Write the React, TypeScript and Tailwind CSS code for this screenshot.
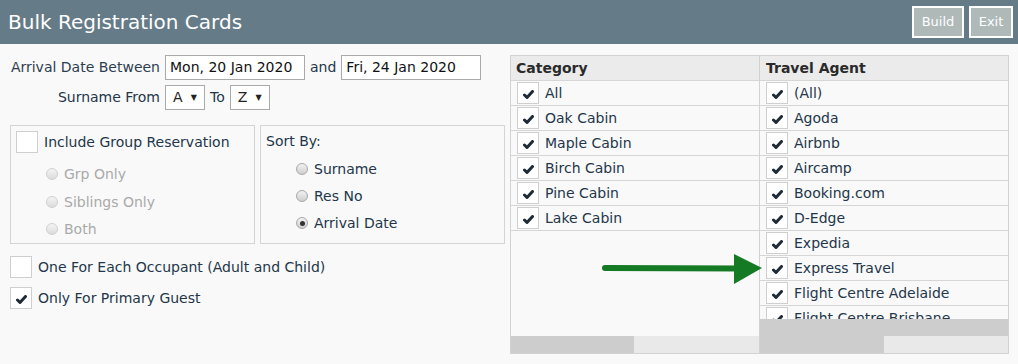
import React from 'react';

const font = { fontFamily: '"DejaVu Sans", Verdana, sans-serif' };

const Check = () => (
  <svg width="11" height="9" viewBox="0 0 11 9">
    <path d="M1.5 5 L4 7.5 L9.5 1.5" fill="none" stroke="#1e2a36" strokeWidth="3" strokeLinecap="round" strokeLinejoin="round" />
  </svg>
);

const Box = ({ checked }: { checked?: boolean }) => (
  <div className="w-[22px] h-[22px] shrink-0 bg-white border border-[#cfcfcf] flex items-center justify-center pt-[2px]">
    {checked && <Check />}
  </div>
);

const Radio = ({ on, disabled }: { on?: boolean; disabled?: boolean }) => (
  <div
    className={`w-[12px] h-[12px] rounded-full border flex items-center justify-center shrink-0 ${
      disabled ? 'border-[#d0d0d0] bg-gradient-to-b from-[#f4f4f4] to-[#dcdcdc]' : 'border-[#a8a8a8] bg-gradient-to-b from-[#f2f2f2] to-[#cfcfcf]'
    }`}
  >
    {on && <div className="w-[5px] h-[5px] rounded-full bg-[#333]" />}
  </div>
);

const Select = ({ v }: { v: string }) => (
  <div className="w-[40px] h-[25px] bg-white border border-[#aaa] flex items-center justify-between pl-[7px] pr-[7px] text-[14px] text-[#222]">
    <span>{v}</span>
    <span className="text-[8px]">▼</span>
  </div>
);

const categories = ['All', 'Oak Cabin', 'Maple Cabin', 'Birch Cabin', 'Pine Cabin', 'Lake Cabin'];
const agents = [
  '(All)',
  'Agoda',
  'Airbnb',
  'Aircamp',
  'Booking.com',
  'D-Edge',
  'Expedia',
  'Express Travel',
  'Flight Centre Adelaide',
  'Flight Centre Brisbane',
];

const Row = ({ label }: { label: string }) => (
  <div className="h-[25px] shrink-0 border-b border-[#d6d6d6] flex items-center pl-[6px] gap-[6px] text-[14px] text-[#23364a]">
    <Box checked />
    <span>{label}</span>
  </div>
);

export default function App() {
  return (
    <div className="w-[1018px] h-[364px] bg-[#f9f9f9] relative overflow-hidden" style={font}>
      <div className="h-[44px] bg-[#657b88] flex items-center justify-between pl-[8px] pr-[5px]">
        <h1 className="text-white text-[20px]">Bulk Registration Cards</h1>
        <div className="flex gap-[5px]">
          <button className="w-[52px] h-[32px] bg-[#aeb9b8] border-2 border-white text-white text-[13px]">Build</button>
          <button className="w-[44px] h-[32px] bg-[#aeb9b8] border-2 border-white text-white text-[13px]">Exit</button>
        </div>
      </div>

      <div className="flex">
        <div className="w-[510px] pl-[10px] pt-[11px] text-[14px] text-[#23364a]">
          <div className="flex items-center h-[25px]">
            <span className="w-[155px] text-right pr-[5px] text-[#2d3e50] whitespace-nowrap">Arrival Date Between</span>
            <div className="w-[140px] h-[25px] bg-white border border-[#aaa] flex items-center pl-[4px] text-[#111] whitespace-nowrap">Mon, 20 Jan 2020</div>
            <span className="px-[5px]">and</span>
            <div className="w-[140px] h-[25px] bg-white border border-[#aaa] flex items-center pl-[4px] text-[#111] whitespace-nowrap">Fri, 24 Jan 2020</div>
          </div>
          <div className="flex items-center h-[25px] mt-[5px]">
            <span className="w-[155px] text-right pr-[5px]">Surname From</span>
            <Select v="A" />
            <span className="px-[5px]">To</span>
            <Select v="Z" />
          </div>

          <div className="flex gap-[5px] mt-[15px]">
            <div className="w-[245px] h-[119px] border border-[#d4d4d4] pl-[5px] pt-[5px]">
              <div className="flex items-center gap-[6px]">
                <Box />
                <span>Include Group Reservation</span>
              </div>
              <div className="pl-[30px] text-[#a9a9a9]">
                {['Grp Only', 'Siblings Only', 'Both'].map((l, i) => (
                  <div key={l} className={`flex items-center gap-[6px] h-[20px] ${i === 0 ? 'mt-[11px]' : i === 1 ? 'mt-[8px]' : 'mt-[7px]'}`}>
                    <Radio disabled />
                    <span>{l}</span>
                  </div>
                ))}
              </div>
            </div>
            <div className="w-[245px] h-[119px] border border-[#d4d4d4] pl-[5px] pt-[5px]">
              <div className="h-[20px] flex items-center">Sort By:</div>
              <div className="pl-[30px]">
                {['Surname', 'Res No', 'Arrival Date'].map((l, i) => (
                  <div key={l} className={`flex items-center gap-[6px] h-[20px] ${i === 0 ? 'mt-[8px]' : 'mt-[7px]'}`}>
                    <Radio on={i === 2} />
                    <span>{l}</span>
                  </div>
                ))}
              </div>
            </div>
          </div>

          <div className="flex items-center gap-[6px] mt-[12px]">
            <Box />
            <span>One For Each Occupant (Adult and Child)</span>
          </div>
          <div className="flex items-center gap-[6px] mt-[9px]">
            <Box checked />
            <span>Only For Primary Guest</span>
          </div>
        </div>

        <div className="mt-[11px] w-[499px] h-[299px] border border-[#d2d2d2] grid grid-cols-[249px_1fr]">
          <div className="flex flex-col border-r border-[#d2d2d2] min-h-0">
            <div className="h-[25px] shrink-0 bg-[#ebebeb] border-b border-[#d6d6d6] flex items-center pl-[5px] pt-[1px] font-bold text-[14px] text-[#2a2a2a]">
              Category
            </div>
            <div className="flex-1 flex flex-col min-h-0">
              {categories.map((c) => (
                <Row key={c} label={c} />
              ))}
            </div>
            <div className="h-[17px] shrink-0 bg-[#e9e9e9] flex">
              <div className="w-[123px] bg-[#cdcdcd]" />
            </div>
          </div>
          <div className="flex flex-col min-h-0">
            <div className="h-[25px] shrink-0 bg-[#ebebeb] border-b border-[#d6d6d6] flex items-center pl-[6px] pt-[1px] font-bold text-[14px] text-[#2a2a2a]">
              Travel Agent
            </div>
            <div className="flex-1 flex flex-col min-h-0 overflow-hidden">
              {agents.map((c) => (
                <Row key={c} label={c} />
              ))}
            </div>
            <div className="h-[17px] shrink-0 bg-[#cdcdcd]" />
            <div className="h-[17px] shrink-0 bg-[#e9e9e9] flex">
              <div className="w-[124px] bg-[#cdcdcd]" />
            </div>
          </div>
        </div>
      </div>

      <svg className="absolute left-[600px] top-[253px]" width="166" height="34" viewBox="0 0 166 34">
        <line x1="5" y1="15" x2="140" y2="15.5" stroke="#157a24" strokeWidth="6" strokeLinecap="round" />
        <polygon points="134,1 162,15 134,31" fill="#157a24" />
      </svg>
    </div>
  );
}
